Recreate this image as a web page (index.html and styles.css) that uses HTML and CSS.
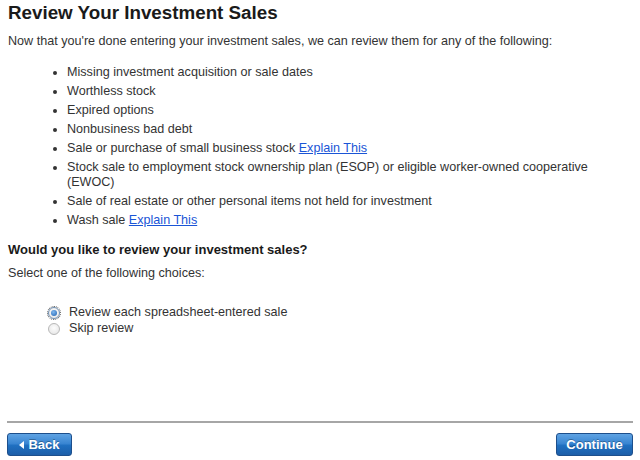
FILE: index.html
```html
<!DOCTYPE html>
<html>
<head>
<meta charset="utf-8">
<link rel="stylesheet" href="styles.css">
</head>
<body>
<div class="page">
  <div class="content">
    <h1 class="title">Review Your Investment Sales</h1>
    <p class="intro">Now that you're done entering your investment sales, we can review them for any of the following:</p>
    <ul class="checks">
      <li>Missing investment acquisition or sale dates</li>
      <li>Worthless stock</li>
      <li>Expired options</li>
      <li>Nonbusiness bad debt</li>
      <li>Sale or purchase of small business stock <a href="#" class="explain">Explain This</a></li>
      <li>Stock sale to employment stock ownership plan (ESOP) or eligible worker-owned cooperative (EWOC)</li>
      <li>Sale of real estate or other personal items not held for investment</li>
      <li>Wash sale <a href="#" class="explain">Explain This</a></li>
    </ul>
    <h2 class="question">Would you like to review your investment sales?</h2>
    <p class="select">Select one of the following choices:</p>
    <div class="choices">
      <label class="choice"><span class="radio checked"><span class="dot"></span></span>Review each spreadsheet-entered sale</label>
      <label class="choice"><span class="radio"></span>Skip review</label>
    </div>
  </div>
  <div class="footer">
    <button class="btn back"><span class="tri"></span>Back</button>
    <button class="btn">Continue</button>
  </div>
</div>
</body>
</html>
```
FILE: styles.css
```css
html, body {
  margin: 0;
  padding: 0;
  background: #fff;
}
.page {
  width: 640px;
  height: 460px;
  display: flex;
  flex-direction: column;
  font-family: "Liberation Sans", Arial, sans-serif;
  color: #222;
}
.content {
  flex: 1;
  padding: 0 8px;
}
.title {
  font-size: 18.8px;
  font-weight: bold;
  margin: 1px 0 0 0;
  line-height: 24px;
  color: #1a1a1a;
}
.intro {
  font-size: 12.6px;
  margin: 9px 0 0 0;
  line-height: 15px;
  color: #333;
}
.checks {
  list-style: disc;
  margin: 16px 0 0 0;
  padding: 0 0 0 59px;
  font-size: 12.6px;
  line-height: 15px;
  color: #333;
}
.checks li {
  margin-bottom: 4px;
  padding-left: 0;
}
.explain {
  color: #1a55d6;
  text-decoration: underline;
}
.question {
  font-size: 13px;
  font-weight: bold;
  margin: 14px 0 0 0;
  line-height: 16px;
  color: #1a1a1a;
}
.select {
  font-size: 12.6px;
  margin: 8px 0 0 0;
  line-height: 15px;
  color: #333;
}
.choices {
  margin: 24px 0 0 40px;
  display: flex;
  flex-direction: column;
  gap: 1px;
}
.choice {
  display: flex;
  align-items: center;
  font-size: 12.6px;
  line-height: 15px;
  color: #333;
  height: 15px;
}
.radio {
  border-radius: 50%;
  border: 1px solid #b8b8b8;
  background: radial-gradient(circle at 50% 40%, #fdfdfd, #e2e2e2);
  margin-right: 9px;
  display: flex;
  align-items: center;
  justify-content: center;
  box-sizing: border-box;
  width: 12px;
  height: 12px;
}
.radio.checked {
  border-color: #6f8fb3;
  outline: 1px dotted #555;
  outline-offset: 0px;
}
.dot {
  width: 6px;
  height: 6px;
  border-radius: 50%;
  background: radial-gradient(circle at 40% 35%, #7fb8f0, #1d5fae);
}
.footer {
  margin: 0 7px;
  border-top: 2px solid #a6a6a6;
  padding: 10px 0 4px 0;
  display: flex;
  justify-content: space-between;
}
.btn {
  height: 23px;
  padding: 0 10px;
  border: 1px solid #1d4f8c;
  border-radius: 3px;
  background: linear-gradient(#5fa3e3 0%, #3a86d2 45%, #1f6fc0 55%, #1c5ea8 100%);
  color: #fff;
  font-family: "Liberation Sans", Arial, sans-serif;
  font-weight: bold;
  font-size: 13px;
  display: flex;
  align-items: center;
  box-sizing: border-box;
  width: 77px;
  justify-content: center;
  text-shadow: 0 -1px 0 rgba(0,0,0,0.3);
}
.btn.back {
  width: 65px;
}
.tri {
  width: 0;
  height: 0;
  border-top: 4px solid transparent;
  border-bottom: 4px solid transparent;
  border-right: 5px solid #fff;
  margin-right: 4px;
}
```
